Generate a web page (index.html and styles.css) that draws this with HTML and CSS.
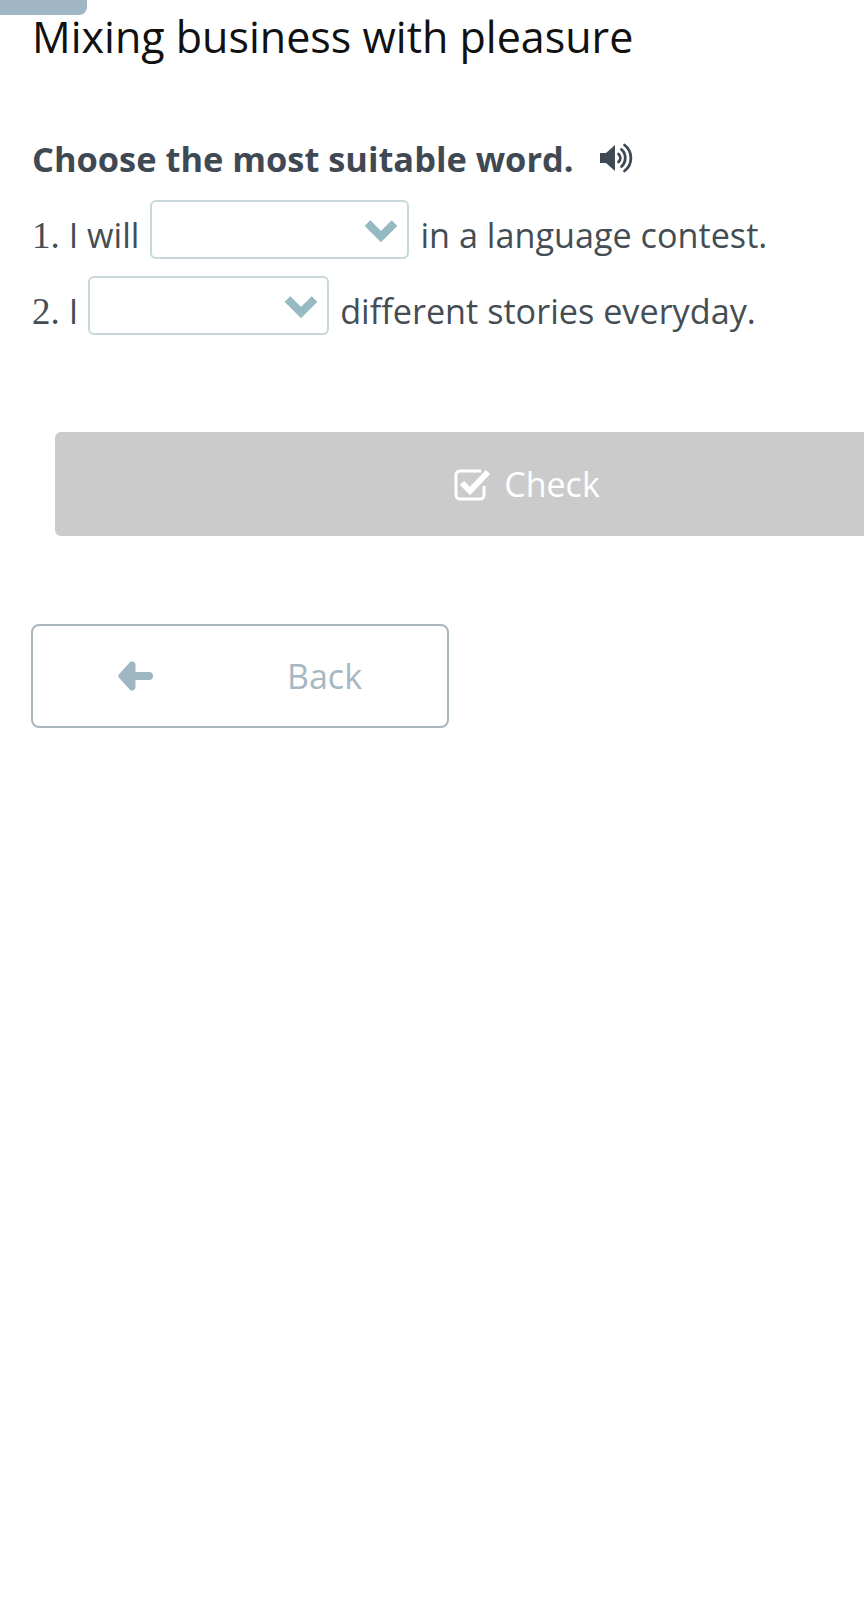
FILE: index.html
```html
<!DOCTYPE html>
<html>
<head>
    <title>Mixing business with pleasure</title>
    <link rel="stylesheet" href="styles.css">
</head>
<body>
    <div class="top-tab"></div>
    <div class="container">
        <h1>Mixing business with pleasure</h1>
        <div class="instruction">
            <b>Choose the most suitable word.</b>
            <svg class="sound-icon" width="34" height="30" viewBox="0 0 34 30">
                <path d="M1 10h6l9-8v26l-9-8H1z" fill="#3f4954"/>
                <path d="M19.500 11c2.500 2.500 2.500 5.500 0 8M22.500 6.500c5 4.500 5 12.500 0 17M25.500 2c8.500 6.500 8.500 19.500 0 26" fill="none" stroke="#3f4954" stroke-width="2.800" stroke-linecap="round"/>
            </svg>
        </div>
        <div class="question">
            <span class="q-text"><span class="num">1.</span> I will</span>
            <span class="select select-first">
                <svg class="chevron" width="32" height="24" viewBox="0 0 32 24"><path d="M2.500 5L16 18.500 29.500 5" fill="none" stroke="#95bac1" stroke-width="8"/></svg>
            </span>
            <span class="q-text">in a language contest.</span>
        </div>
        <div class="question">
            <span class="q-text"><span class="num">2.</span> I</span>
            <span class="select select-second">
                <svg class="chevron" width="32" height="24" viewBox="0 0 32 24"><path d="M2.500 5L16 18.500 29.500 5" fill="none" stroke="#95bac1" stroke-width="8"/></svg>
            </span>
            <span class="q-text">different stories everyday.</span>
        </div>
        <button class="check-btn">
            <svg width="38" height="36" viewBox="0 0 38 36">
                <path d="M30 20v9a4 4 0 0 1-4 4H6a4 4 0 0 1-4-4V9a4 4 0 0 1 4-4h21" fill="none" stroke="#fff" stroke-width="3"/>
                <path d="M8 17l8 8L34 6" fill="none" stroke="#fff" stroke-width="6"/>
            </svg>
            Check
        </button>
        <button class="back-btn">
            <svg width="36" height="30" viewBox="0 0 36 30">
                <path d="M15 4L5 15l10 11z" fill="#9fb6c3" stroke="#9fb6c3" stroke-width="7" stroke-linejoin="round"/>
                <path d="M12 15h20" fill="none" stroke="#9fb6c3" stroke-width="8" stroke-linecap="round"/>
            </svg>
            <span>Back</span>
        </button>
    </div>
</body>
</html>
```

FILE: styles.css
```css
html, body {
    overflow: hidden;
}

body {
    font-family: 'Open Sans', sans-serif;
    background-color: #fff;
    margin: 0;
    padding: 0;
    height: 1614px;
}

.top-tab {
    width: 87px;
    height: 15px;
    background-color: #a0b6c4;
    border-bottom-right-radius: 8px;
}

.container {
    padding-left: 32px;
}

h1 {
    font-size: 43px;
    font-weight: 400;
    line-height: 60px;
    color: #111;
    margin: -8px 0 0 0;
}

.instruction {
    display: flex;
    align-items: center;
    margin-top: 69px;
    height: 44px;
    color: #3f4954;
    font-size: 34.400px;
}

.instruction b {
    font-weight: 700;
}

.sound-icon {
    margin-left: 25px;
}

.question {
    display: flex;
    align-items: center;
    font-size: 34.200px;
    color: #454d54;
    height: 59px;
    margin-top: 17px;
    gap: 11px;
}

.instruction + .question {
    margin-top: 20px;
}

.q-text {
    padding-top: 10px;
}

.num {
    font-family: 'Liberation Serif', serif;
    font-size: 37px;
}

.select {
    display: flex;
    align-items: center;
    justify-content: flex-end;
    box-sizing: border-box;
    height: 59px;
    padding-right: 10px;
    border: 2px solid #c8d8da;
    border-radius: 6px;
    background-color: #fff;
}

.select-first {
    width: 259px;
}

.select-second {
    width: 241px;
    margin-left: -1px;
}

.check-btn {
    display: flex;
    align-items: center;
    justify-content: center;
    gap: 12px;
    width: 940px;
    height: 104px;
    margin: 97px 0 0 23px;
    padding: 0 0 0 4px;
    border: none;
    border-radius: 6px;
    background-color: #cbcbcb;
    color: #fff;
    font-family: inherit;
    font-size: 34px;
}

.back-btn {
    display: flex;
    align-items: center;
    box-sizing: border-box;
    width: 418px;
    height: 104px;
    margin: 88px 0 0 -1px;
    padding: 0 0 0 84px;
    border: 2px solid #a9b7bd;
    border-radius: 8px;
    background-color: #fff;
    color: #a5b8c3;
    font-family: inherit;
    font-size: 34px;
}

.back-btn span {
    margin-left: 134px;
}
```
